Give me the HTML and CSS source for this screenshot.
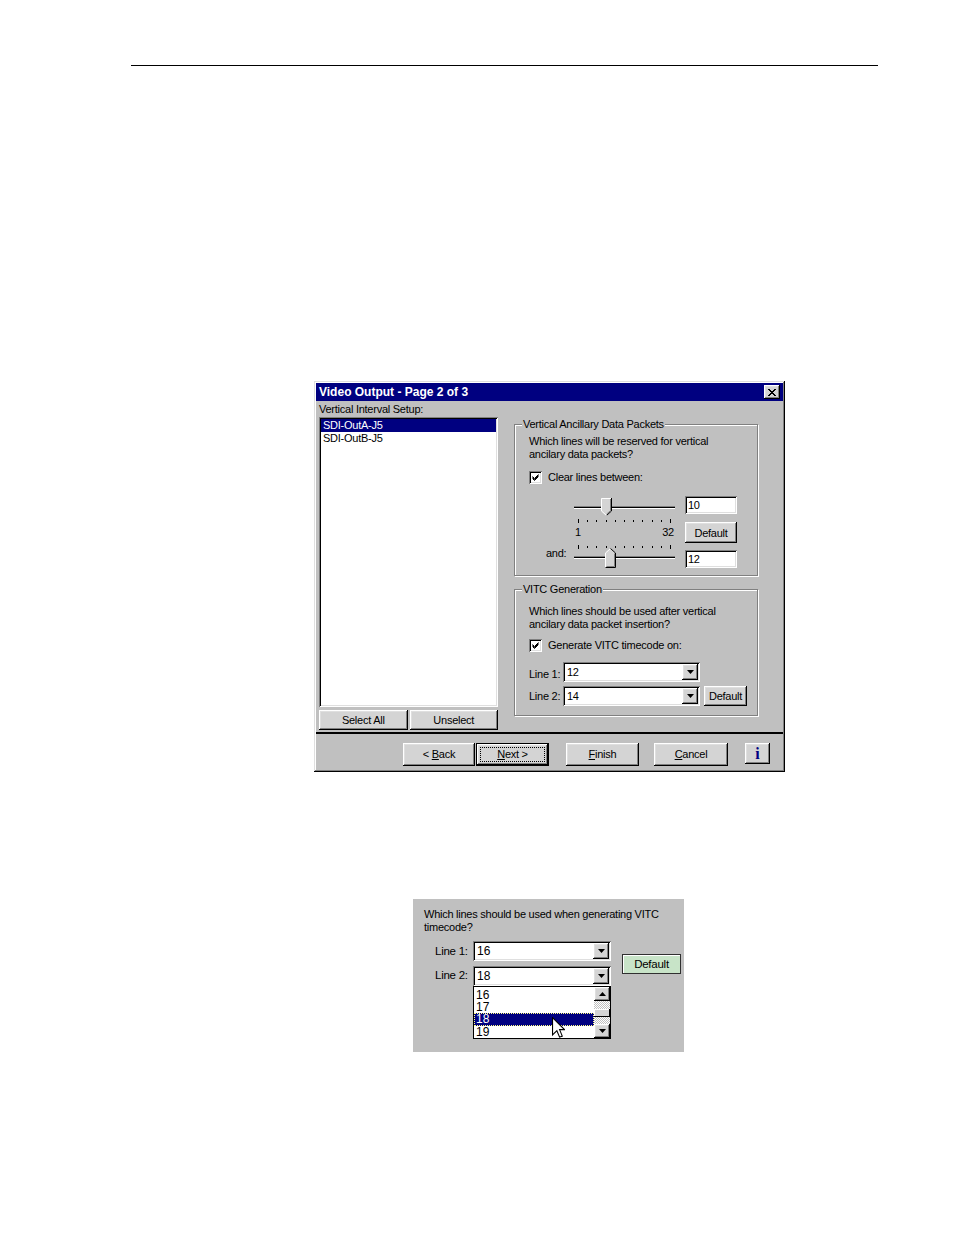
FILE: index.html
```html
<!DOCTYPE html>
<html>
<head>
<meta charset="utf-8">
<title>Video Output</title>
<link rel="stylesheet" href="styles.css">
</head>
<body>
<div class="rule"></div>

<div class="dialog">
  <div class="titlebar">
    <span class="title">Video Output - Page 2 of 3</span>
    <span class="close"><svg width="8" height="7" viewBox="0 0 8 7"><path d="M0 0 L7 7 M1 0 L8 7 M7 0 L0 7 M8 0 L1 7" stroke="#000" stroke-width="1" fill="none"/></svg></span>
  </div>
  <div class="main">
    <div class="leftcol">
      <div class="caption">Vertical Interval Setup:</div>
      <div class="listbox">
        <div class="item selected">SDI-OutA-J5</div>
        <div class="item">SDI-OutB-J5</div>
      </div>
      <div class="btnrow">
        <div class="btn">Select All</div>
        <div class="btn">Unselect</div>
      </div>
    </div>
    <div class="rightcol">
      <div class="group g1">
        <span class="group-label">Vertical Ancillary Data Packets</span>
        <div class="para p1">Which lines will be reserved for vertical<br>ancilary data packets?</div>
        <div class="check-row cr1">
          <span class="checkbox"><svg width="7" height="7" viewBox="0 0 7 7"><path d="M0.5 2.5 L2.5 4.5 L6.5 0.5 M0.5 3.5 L2.5 5.5 L6.5 1.5 M0.5 4.5 L2.5 6.5 L6.5 2.5" stroke="#000" stroke-width="1" fill="none"/></svg></span>
          <span>Clear lines between:</span>
        </div>
        <div class="slider-area">
          <div class="slider s1">
            <div class="track"></div>
            <svg class="thumb thumb-down" width="11" height="18" viewBox="0 0 11 18"><path d="M0 0 H11 V13 L5.5 18 L0 13 Z" fill="#d4d4d4"/><path d="M0.5 13 V0.5 H10" fill="none" stroke="#fff"/><path d="M10.5 0 V13 L5.5 17.5" fill="none" stroke="#000"/><path d="M0.5 13 L5.5 17.5" fill="none" stroke="#fff"/><path d="M9.5 1 V12.6 L5.5 16.2" fill="none" stroke="#808080"/></svg>
          </div>
          <div class="ticks t1"><i class="end"></i><i></i><i></i><i></i><i></i><i></i><i></i><i></i><i></i><i></i><i class="end"></i></div>
          <div class="scale"><span>1</span><span>32</span></div>
          <div class="ticks t2"><i class="end"></i><i></i><i></i><i></i><i></i><i></i><i></i><i></i><i></i><i></i><i class="end"></i></div>
          <div class="slider s2">
            <div class="track"></div>
            <svg class="thumb thumb-up" width="11" height="20" viewBox="0 0 11 20"><path d="M0 5 L5.5 0 L11 5 V20 H0 Z" fill="#d4d4d4"/><path d="M0.5 19.5 V5 L5.5 0.5" stroke="#fff" fill="none"/><path d="M5.5 0.5 L10.5 5 V19.5 H0.5" stroke="#000" fill="none"/><path d="M9.5 5.5 V18.5 H1.5" stroke="#808080" fill="none"/></svg>
          </div>
          <div class="and">and:</div>
          <div class="edit e1">10</div>
          <div class="btn dflt">Default</div>
          <div class="edit e2">12</div>
        </div>
      </div>

      <div class="group g2">
        <span class="group-label">VITC Generation</span>
        <div class="para p2">Which lines should be used after vertical<br>ancilary data packet insertion?</div>
        <div class="check-row cr2">
          <span class="checkbox"><svg width="7" height="7" viewBox="0 0 7 7"><path d="M0.5 2.5 L2.5 4.5 L6.5 0.5 M0.5 3.5 L2.5 5.5 L6.5 1.5 M0.5 4.5 L2.5 6.5 L6.5 2.5" stroke="#000" stroke-width="1" fill="none"/></svg></span>
          <span>Generate VITC timecode on:</span>
        </div>
        <div class="line-row lr1">
          <span class="line-label">Line 1:</span>
          <div class="combo"><span class="combo-val">12</span><span class="combo-btn"><svg width="7" height="4" viewBox="0 0 7 4"><path d="M0 0 H7 L3.5 4 Z" fill="#000"/></svg></span></div>
        </div>
        <div class="line-row lr2">
          <span class="line-label">Line 2:</span>
          <div class="combo"><span class="combo-val">14</span><span class="combo-btn"><svg width="7" height="4" viewBox="0 0 7 4"><path d="M0 0 H7 L3.5 4 Z" fill="#000"/></svg></span></div>
          <div class="btn dflt2">Default</div>
        </div>
      </div>
    </div>
  </div>
  <div class="sep"></div>
  <div class="footer">
    <div class="btn fb back"><span>&lt; <u>B</u>ack</span></div>
    <div class="btn fb next"><span><u>N</u>ext &gt;</span></div>
    <div class="btn fb finish"><span><u>F</u>inish</span></div>
    <div class="btn fb cancel"><span><u>C</u>ancel</span></div>
    <div class="btn info">i</div>
  </div>
</div>

<div class="panel">
  <div class="ptext">Which lines should be used when generating VITC<br>timecode?</div>
  <div class="pbody">
    <div class="pleft">
      <div class="prow">
        <span class="plabel">Line 1:</span>
        <div class="combo pcombo"><span class="combo-val">16</span><span class="combo-btn"><svg width="7" height="4" viewBox="0 0 7 4"><path d="M0 0 H7 L3.5 4 Z" fill="#000"/></svg></span></div>
      </div>
      <div class="prow prow2">
        <span class="plabel">Line 2:</span>
        <div class="combo pcombo"><span class="combo-val">18</span><span class="combo-btn"><svg width="7" height="4" viewBox="0 0 7 4"><path d="M0 0 H7 L3.5 4 Z" fill="#000"/></svg></span></div>
      </div>
      <div class="dropdown">
        <div class="dd-items">
          <div class="dd-item">16</div>
          <div class="dd-item">17</div>
          <div class="dd-item dd-sel">18</div>
          <div class="dd-item">19</div>
        </div>
        <div class="dd-scroll">
          <div class="sb-btn"><svg width="7" height="4" viewBox="0 0 7 4"><path d="M0 4 H7 L3.5 0 Z" fill="#000"/></svg></div>
          <div class="sb-track sb-a"></div>
          <div class="sb-thumb"></div>
          <div class="sb-track sb-b"></div>
          <div class="sb-btn"><svg width="7" height="4" viewBox="0 0 7 4"><path d="M0 0 H7 L3.5 4 Z" fill="#000"/></svg></div>
        </div>
        <svg class="cursor" width="13" height="23" viewBox="0 0 12 21"><path d="M0.5 0.5 V16.5 L4.5 12.5 L7 18.5 L9.5 17.5 L7 11.5 H11.5 Z" fill="#fff" stroke="#000" stroke-width="1"/></svg>
      </div>
    </div>
    <div class="green-btn">Default</div>
  </div>
</div>
</body>
</html>
```
FILE: styles.css
```css
* { box-sizing: border-box; }
html, body { margin: 0; padding: 0; background: #fff; }
body {
  width: 954px;
  height: 1235px;
  overflow: hidden;
  font-family: "Liberation Sans", Arial, sans-serif;
  font-size: 11px;
  letter-spacing: -0.25px;
  color: #000;
}

.rule { margin: 65px 0 0 131px; width: 747px; height: 1px; background: #000; }

/* ---------- dialog ---------- */
.dialog {
  margin: 315px 0 0 314px;
  width: 471px;
  height: 391px;
  background: #c0c0c0;
  padding: 2px;
  box-shadow: inset -1px -1px #000, inset 1px 1px #dfdfdf, inset -2px -2px #808080, inset 2px 2px #fff;
  display: flex;
  flex-direction: column;
}

.titlebar {
  height: 18px;
  flex: none;
  background: #000080;
  display: flex;
  align-items: center;
  justify-content: space-between;
  padding: 0 3px;
}
.title { color: #fff; font-weight: bold; font-size: 12px; letter-spacing: 0; }
.close {
  width: 16px;
  height: 14px;
  background: #d4d4d4;
  display: flex;
  align-items: center;
  justify-content: center;
  box-shadow: inset -1px -1px #000, inset 1px 1px #fff, inset -2px -2px #808080, inset 2px 2px #dfdfdf;
}

.main { height: 331px; flex: none; display: flex; padding-left: 3px; }

.leftcol { width: 179px; display: flex; flex-direction: column; }
.caption { margin-top: 2px; line-height: 13px; }
.listbox {
  margin-top: 1px;
  height: 290px;
  background: #fff;
  padding: 2px;
  box-shadow: inset 1px 1px #808080, inset -1px -1px #fff, inset 2px 2px #000, inset -2px -2px #dfdfdf;
}
.item { line-height: 13px; padding-left: 2px; }
.item.selected { background: #000080; color: #fff; }
.btnrow { margin-top: 3px; height: 20px; display: flex; gap: 2px; }
.btnrow .btn { flex: 1; padding-bottom: 1px; }

.btn {
  background: #d4d4d4;
  display: flex;
  align-items: center;
  justify-content: center;
  box-shadow: inset -1px -1px #000, inset 1px 1px #fff, inset -2px -2px #808080, inset 2px 2px #dfdfdf;
}

.rightcol { margin-left: 16px; width: 244px; display: flex; flex-direction: column; }

.group {
  position: relative;
  border: 1px solid #808080;
  box-shadow: inset 1px 1px #fff, 1px 1px #fff;
  padding-left: 14px;
}
.group-label {
  position: absolute;
  top: -7px;
  left: 7px;
  padding: 0 1px;
  line-height: 13px;
  background: #c0c0c0;
}
.g1 { margin-top: 23px; height: 152px; padding-top: 10px; }
.g2 { margin-top: 13px; height: 127px; padding-top: 15px; }

.para { line-height: 13px; }

.check-row { display: flex; align-items: center; line-height: 13px; }
.cr1 { margin-top: 10px; }
.cr2 { margin-top: 8px; }
.checkbox {
  width: 13px;
  height: 13px;
  margin-right: 6px;
  background: #fff;
  display: flex;
  align-items: center;
  justify-content: center;
  box-shadow: inset 1px 1px #808080, inset -1px -1px #fff, inset 2px 2px #000, inset -2px -2px #dfdfdf;
}

/* slider area */
.slider-area {
  margin-top: 12px;
  margin-left: -14px;
  padding-left: 14px;
  display: grid;
  grid-template-columns: 45px 101px 10px 52px;
  grid-template-rows: 22px 6px 20px 5px 20px;
}
.slider { position: relative; grid-column: 2; }
.s1 { grid-row: 1; padding-top: 10px; }
.s2 { grid-row: 5; padding-top: 7px; }
.track {
  height: 3px;
  background: linear-gradient(#808080 0 1px, #000 1px 2px, #fff 2px 3px);
}
.thumb { position: absolute; display: block; }
.thumb-down { left: 27px; top: 2px; }
.thumb-up { left: 31px; top: -1px; }

.ticks {
  grid-column: 2;
  display: flex;
  justify-content: space-between;
  align-items: center;
  padding: 0 4px;
}
.t1 { grid-row: 2; height: 5px; }
.t2 { grid-row: 4; height: 5px; }
.ticks i { display: block; width: 1px; height: 2px; background: #000; }
.ticks i.end { height: 4px; }

.scale {
  grid-row: 3;
  grid-column: 2;
  display: flex;
  justify-content: space-between;
  line-height: 13px;
  padding: 2px 1px 0 1px;
}
.and { grid-row: 5; grid-column: 1; line-height: 13px; margin-top: -2px; padding-left: 17px; }

.edit {
  background: #fff;
  height: 18px;
  line-height: 16px;
  padding: 2px 0 0 3px;
  box-shadow: inset 1px 1px #808080, inset -1px -1px #fff, inset 2px 2px #000, inset -2px -2px #dfdfdf;
}
.e1 { grid-row: 1; grid-column: 4; margin-top: 0; line-height: 14px; }
.e2 { grid-row: 5; grid-column: 4; margin-top: 1px; line-height: 14px; }
.dflt { grid-row: 2 / 5; grid-column: 4; margin-top: 4px; height: 21px; }

/* combos */
.line-row { display: flex; align-items: center; }
.lr1 { margin-top: 10px; }
.lr2 { margin-top: 4px; }
.line-label { width: 34px; line-height: 13px; }
.lr1 .line-label { padding-top: 5px; }
.combo {
  width: 137px;
  height: 20px;
  background: #fff;
  padding: 2px;
  display: flex;
  justify-content: space-between;
  box-shadow: inset 1px 1px #808080, inset -1px -1px #fff, inset 2px 2px #000, inset -2px -2px #dfdfdf;
}
.combo-val { line-height: 16px; padding-left: 2px; }
.combo-btn {
  width: 16px;
  height: 16px;
  background: #d4d4d4;
  display: flex;
  align-items: center;
  justify-content: center;
  box-shadow: inset -1px -1px #000, inset 1px 1px #fff, inset -2px -2px #808080, inset 2px 2px #dfdfdf;
}
.dflt2 { margin-left: 4px; width: 43px; height: 20px; }

.sep { height: 2px; background: #000; flex: none; margin-top: 0; }

.footer { flex: 1; display: flex; align-items: flex-start; padding: 9px 0 0 87px; }
.fb { height: 23px; width: 73px; position: relative; padding-bottom: 1px; }
.back { width: 72px; }
.next { margin-left: 1px; box-shadow: inset 0 0 0 1px #000, inset -2px -2px #000, inset 2px 2px #fff, inset -3px -3px #808080, inset 3px 3px #dfdfdf; }
.next::after {
  content: "";
  position: absolute;
  left: 4px; right: 4px; top: 4px; bottom: 4px;
  border: 1px dotted #000;
}
.finish { margin-left: 17px; }
.cancel { margin-left: 15px; width: 74px; }
.info {
  margin: 0 0 0 17px;
  width: 25px;
  height: 21px;
  font-family: "Liberation Serif", "Times New Roman", serif;
  font-weight: bold;
  font-size: 16px;
  letter-spacing: 0;
  color: #000080;
}

/* ---------- second panel ---------- */
.panel {
  margin: 127px 0 0 413px;
  width: 271px;
  height: 153px;
  background: #c0c0c0;
  padding: 9px 0 0 11px;
}
.ptext { line-height: 13px; }
.pbody { display: flex; align-items: flex-start; }
.pleft { display: flex; flex-direction: column; margin-left: 11px; }
.prow { display: flex; align-items: center; margin-top: 7px; }
.prow2 { margin-top: 5px; }
.plabel { width: 38px; font-size: 11.5px; line-height: 13px; }
.prow .plabel { padding-top: 1px; }
.prow2 .plabel { padding-top: 0; margin-top: -2px; }
.pcombo { width: 138px; font-size: 12px; letter-spacing: 0; }
.dropdown {
  position: relative;
  margin-left: 38px;
  width: 138px;
  height: 53px;
  background: #fff;
  border: 1px solid #000;
  display: flex;
  font-size: 12px;
  letter-spacing: 0;
}
.dd-items { flex: 1; padding-top: 2px; }
.dd-item { line-height: 12px; padding-left: 2px; }
.dd-sel { background: #000080; color: #fff; outline: 1px dotted #ffff80; outline-offset: -1px; line-height: 13px; }
.dd-scroll { width: 16px; display: flex; flex-direction: column; }
.sb-btn {
  height: 14px;
  background: #d4d4d4;
  display: flex;
  align-items: center;
  justify-content: center;
  box-shadow: inset -1px -1px #000, inset 1px 1px #fff, inset -2px -2px #808080, inset 2px 2px #dfdfdf;
}
.sb-track { background: repeating-conic-gradient(#c0c0c0 0 25%, #fff 0 50%) 0 0 / 2px 2px; }
.sb-a { height: 8px; }
.sb-b { height: 7px; }
.sb-thumb {
  height: 8px;
  background: #d4d4d4;
  box-shadow: inset -1px -1px #000, inset 1px 1px #fff;
}
.cursor { position: absolute; left: 78px; top: 30px; }

.green-btn {
  margin: 20px 0 0 11px;
  width: 59px;
  height: 20px;
  background: #c8e4c8;
  border: 1px solid #303030;
  box-shadow: inset 1px 1px #fff;
  display: flex;
  align-items: center;
  justify-content: center;
  font-size: 11.5px;
}
```
